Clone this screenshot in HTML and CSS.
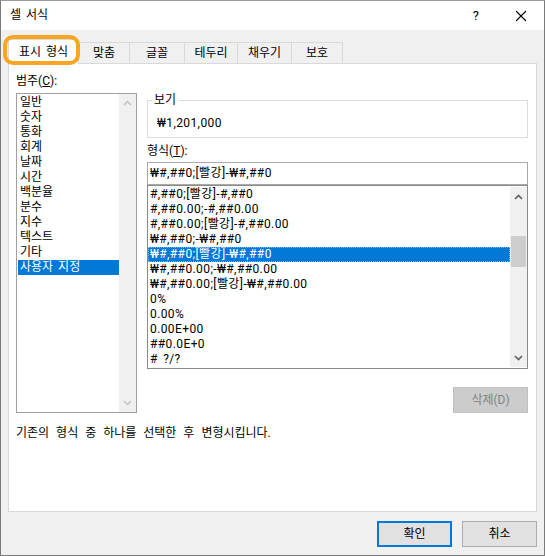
FILE: index.html
```html
<!DOCTYPE html>
<html lang="ko">
<head>
<meta charset="utf-8">
<link rel="stylesheet" href="styles.css">
</head>
<body>
<div class="window">
  <div class="titlebar">
    <span class="title">셀 서식</span>
    <span class="help">?</span>
    <svg class="close" width="12" height="12" viewBox="0 0 12 12"><path d="M1 1L11 11M11 1L1 11" stroke="#000" stroke-width="1.1" fill="none"/></svg>
  </div>
  <div class="client">
    <div class="tabs">
      <div class="tab active">표시 형식</div>
      <div class="tab w51">맞춤</div>
      <div class="tab w55">글꼴</div>
      <div class="tab w53">테두리</div>
      <div class="tab w54">채우기</div>
      <div class="tab w51">보호</div>
    </div>
    <div class="highlight"></div>
    <div class="panel">
      <div class="cols">
        <div class="left">
          <div class="label">범주(<u>C</u>):</div>
          <div class="listbox cat">
            <div class="items">
              <div class="row">일반</div>
              <div class="row">숫자</div>
              <div class="row">통화</div>
              <div class="row">회계</div>
              <div class="row">날짜</div>
              <div class="row">시간</div>
              <div class="row">백분율</div>
              <div class="row">분수</div>
              <div class="row">지수</div>
              <div class="row">텍스트</div>
              <div class="row">기타</div>
              <div class="row sel">사용자 지정</div>
            </div>
            <div class="scrollbar disabled">
              <svg class="arrow" width="9" height="6" viewBox="0 0 9 6"><path d="M1 5L4.5 1.5L8 5" stroke="#c4c4c4" stroke-width="1.6" fill="none"/></svg>
              <svg class="arrow" width="9" height="6" viewBox="0 0 9 6"><path d="M1 1L4.5 4.5L8 1" stroke="#c4c4c4" stroke-width="1.6" fill="none"/></svg>
            </div>
          </div>
        </div>
        <div class="right">
          <div class="preview">
            <span class="legend">보기</span>
            <div class="preview-value">₩1,201,000</div>
          </div>
          <div class="label fmt-label">형식(<u>T</u>):</div>
          <div class="input">₩#,##0;[빨강]-₩#,##0</div>
          <div class="listbox fmt">
            <div class="items">
              <div class="row">#,##0;[빨강]-#,##0</div>
              <div class="row">#,##0.00;-#,##0.00</div>
              <div class="row">#,##0.00;[빨강]-#,##0.00</div>
              <div class="row">₩#,##0;-₩#,##0</div>
              <div class="row sel focus">₩#,##0;[빨강]-₩#,##0</div>
              <div class="row">₩#,##0.00;-₩#,##0.00</div>
              <div class="row">₩#,##0.00;[빨강]-₩#,##0.00</div>
              <div class="row">0%</div>
              <div class="row">0.00%</div>
              <div class="row">0.00E+00</div>
              <div class="row">##0.0E+0</div>
              <div class="row"># ?/?</div>
            </div>
            <div class="scrollbar">
              <svg class="arrow" width="9" height="6" viewBox="0 0 9 6"><path d="M1 5L4.5 1.5L8 5" stroke="#606060" stroke-width="1.6" fill="none"/></svg>
              <div class="track"><div class="thumb"></div></div>
              <svg class="arrow" width="9" height="6" viewBox="0 0 9 6"><path d="M1 1L4.5 4.5L8 1" stroke="#606060" stroke-width="1.6" fill="none"/></svg>
            </div>
          </div>
          <div class="btnrow">
            <div class="btn disabled-btn">삭제(D)</div>
          </div>
        </div>
      </div>
      <div class="desc">기존의 형식 중 하나를 선택한 후 변형시킵니다.</div>
    </div>
    <div class="footer">
      <div class="btn primary">확인</div>
      <div class="btn">취소</div>
    </div>
  </div>
</div>
</body>
</html>
```

FILE: styles.css
```css
html, body {
  margin: 0;
  padding: 0;
  background: #fff;
}
body {
  font-family: Roboto, "Noto Sans CJK KR", sans-serif;
  font-size: 12px;
  color: #000;
  word-spacing: 2px;
}
.window {
  position: relative;
  width: 545px;
  height: 556px;
  box-sizing: border-box;
  border: 1px solid #7a7a7a;
  border-top-color: #9a9a9a;
  display: flex;
  flex-direction: column;
}
.titlebar {
  height: 29px;
  background: #fff;
  display: flex;
  align-items: center;
  padding-left: 9px;
}
.title {
  flex: 1;
  line-height: 15px;
}
.help {
  font-size: 13px;
  margin-right: 36px;
}
.close {
  margin-right: 17px;
}
.client {
  flex: 1;
  background: #f0f0f0;
  display: flex;
  flex-direction: column;
}
.tabs {
  display: flex;
  align-items: flex-end;
  height: 24px;
  margin: 9px 7px 0;
  position: relative;
  z-index: 1;
}
.tab {
  box-sizing: border-box;
  height: 21px;
  border: 1px solid #d9d9d9;
  border-bottom: none;
  background: #f0f0f0;
  margin-left: -1px;
  display: flex;
  align-items: center;
  justify-content: center;
  line-height: 15px;
}
.tab.active {
  width: 71px;
  height: 25px;
  margin-left: 0;
  margin-bottom: -1px;
  background: #fff;
  padding-top: 1px;
}
.w51 { width: 52px; }
.w53 { width: 54px; }
.w54 { width: 55px; }
.w55 { width: 56px; }
.highlight {
  position: absolute;
  left: 2px;
  top: 34px;
  width: 77px;
  height: 30px;
  box-sizing: border-box;
  border: 4px solid #f6a623;
  border-radius: 10px;
  z-index: 2;
}
.panel {
  box-sizing: border-box;
  height: 449px;
  margin: 0 7px;
  border: 1px solid #d9d9d9;
  background: #fff;
  padding: 9px 7px 0;
}
.cols {
  display: flex;
}
.left {
  width: 121px;
}
.right {
  width: 381px;
  margin-left: 10px;
}
.label {
  line-height: 17px;
  height: 17px;
}
.listbox {
  box-sizing: border-box;
  border: 1px solid #a0a0a0;
  display: flex;
  background: #fff;
}
.cat {
  margin-top: 3px;
  height: 320px;
}
.items {
  flex: 1;
  padding: 1px 0 0 1px;
}
.row {
  height: 15px;
  line-height: 15px;
  padding-left: 2px;
  white-space: nowrap;
  box-sizing: border-box;
}
.row.sel {
  background: #0078d7;
  color: #fff;
}
.row.focus {
  outline: 1px dotted #7fb6e6;
  outline-offset: -1px;
}
.scrollbar {
  width: 17px;
  background: #f0f0f0;
  display: flex;
  flex-direction: column;
  align-items: center;
  justify-content: space-between;
  padding: 6px 0;
  box-sizing: border-box;
}
.fmt .items {
  padding-left: 0;
}
.fmt .row,
.input,
.preview-value {
  letter-spacing: 0.4px;
}
.fmt .scrollbar {
  margin: 1px 0;
  padding: 7px 0 6px;
}
.track {
  flex: 1;
  width: 15px;
  padding-top: 36px;
}
.thumb {
  height: 31px;
  background: #cdcdcd;
}
.preview {
  position: relative;
  box-sizing: border-box;
  margin-top: 27px;
  height: 38px;
  border: 1px solid #dcdcdc;
}
.legend {
  position: absolute;
  top: -8px;
  left: 4px;
  padding: 0 2px;
  background: #fff;
  line-height: 15px;
}
.preview-value {
  padding: 15px 0 0 9px;
  line-height: 15px;
}
.fmt-label {
  margin-top: 5px;
}
.input {
  box-sizing: border-box;
  margin-top: 2px;
  height: 23px;
  border: 1px solid #a9a9a9;
  line-height: 20px;
  padding-left: 2px;
}
.fmt {
  height: 184px;
  border-color: #8a8a8a;
}
.btnrow {
  display: flex;
  justify-content: flex-end;
  margin-top: 18px;
}
.btn {
  box-sizing: border-box;
  width: 75px;
  height: 26px;
  border: 1px solid #adadad;
  background: #e1e1e1;
  display: flex;
  align-items: center;
  justify-content: center;
  line-height: 15px;
}
.disabled-btn {
  background: #cccccc;
  border-color: #bfbfbf;
  color: #838383;
}
.desc {
  margin-top: 13px;
  line-height: 15px;
  word-spacing: 4px;
}
.footer {
  display: flex;
  justify-content: flex-end;
  gap: 10px;
  padding: 9px 7px 0;
}
.btn.primary {
  border: 2px solid #0078d7;
}
```
